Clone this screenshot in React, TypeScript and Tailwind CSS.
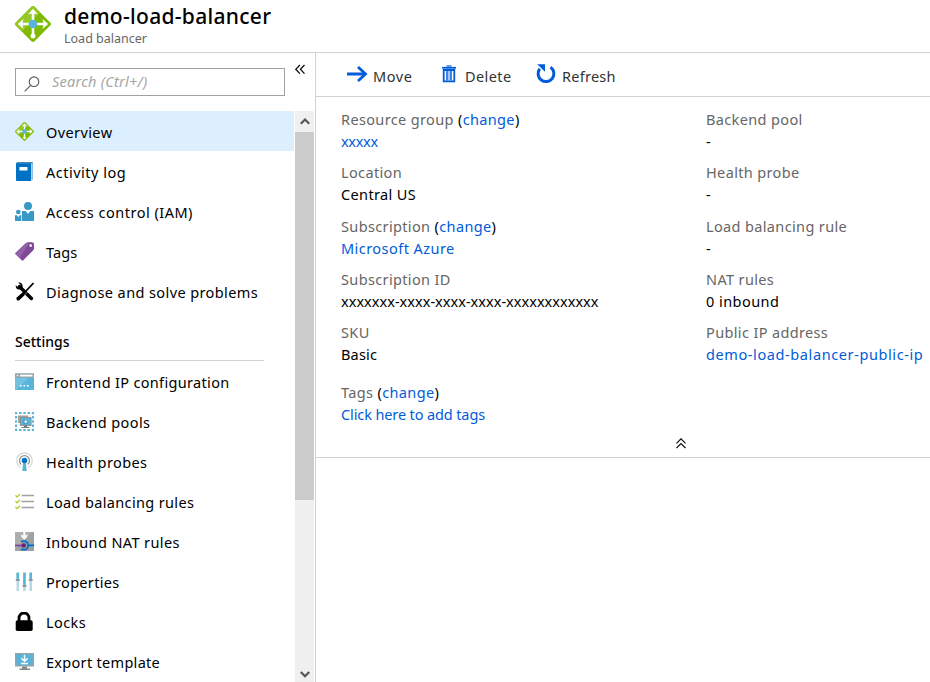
import React from 'react';

const svgProps = { width: 19, height: 19, viewBox: '0 0 19 19' };

function BalancerIcon({ size }: { size: number }) {
  return (
    <svg width={size} height={size} viewBox="0 0 36 36" className="shrink-0">
      <path d="M16.4.8a2.4 2.4 0 0 1 3.2 0l15.600 15.600a2.400 2.400 0 0 1 0 3.200L19.600 35.200a2.400 2.400 0 0 1-3.200 0L.8 19.600a2.400 2.400 0 0 1 0-3.200z" fill="#7fba00" />
      <path d="M16.400.8a2.400 2.400 0 0 1 3.200 0l5.500 5.500L7 25.800.8 19.600a2.400 2.400 0 0 1 0-3.200z" fill="#93c827" />
      <path d="M18 5v25M5 18h26" stroke="#fff" strokeWidth="2.600" fill="none" />
      <g fill="#fff">
        <path d="M18 2.800l5 5.700-5-1.200-5 1.200zM2.800 18l5.700-5-1.200 5 1.200 5zM33.200 18l-5.700-5 1.200 5-1.200 5z" />
        <circle cx="18" cy="30" r="2.500" />
      </g>
      <circle cx="18" cy="18" r="4.300" fill="#59b4d9" />
    </svg>
  );
}

const ActivityIcon = () => (
  <svg {...svgProps}>
    <path d="M2.500 0H18v17.500L15.500 19V2H1z" fill="#8fbce0" />
    <path d="M16.200 1.500V18" stroke="#d5e5f2" strokeWidth=".8" />
    <path d="M1 1.300h15V19H2a1 1 0 0 1-1-1z" fill="#0072c6" />
    <path d="M1.500.8h16" stroke="#2b75a8" />
    <path d="M4.500 5h8v3.500h-8z" fill="#fff" />
  </svg>
);

const AccessIcon = () => (
  <svg {...svgProps}>
    <g fill="#3999c6">
      <circle cx="13" cy="4" r="4" />
      <path d="M7 9h3.700l2.300 3 2.300-3H19v10H7z" />
      <circle cx="3.300" cy="10" r="2.300" />
      <path d="M0 13.300h2l1.300 2 1.300-2h1.700V19H0z" />
    </g>
  </svg>
);

const TagIcon = () => (
  <svg {...svgProps}>
    <path d="M0 11.500 10.500 1.500Q12 .3 14 .3h3q2 .2 2 2v4q0 1.200-1 2.200L7.500 19z" fill="#804998" />
    <path d="M0 11.500 10.500 1.500Q12 .3 14 .3h1L4.500 15.900z" fill="#9460a8" />
    <circle cx="15.700" cy="3.600" r="1.300" fill="#fff" />
  </svg>
);

const DiagnoseIcon = () => (
  <svg {...svgProps}>
    <path d="M4.500 4.500 16.400 16.400" stroke="#000" strokeWidth="3.500" strokeLinecap="round" />
    <path d="M3.200.5 6 3.200 5.500 5 3.400 5.600.8 3.200C.2 5.700 2.100 8 5 7.400L7.500 5C8.300 2.100 5.700 0 3.200.5z" />
    <path d="M18.500 1 11 9" stroke="#000" strokeWidth="1.800" />
    <path d="m8 10 2.300 2.400L4.500 18q-1.300 1-2.700 0-1-1.500.2-2.700z" />
    <path d="m9.700 12.900 3-3" stroke="#fff" strokeWidth=".5" />
  </svg>
);

const FrontendIcon = () => (
  <svg {...svgProps}>
    <path d="M0 1.500h19V18H0z" fill="#59b4d9" />
    <path d="M0 6h14L1 18H0z" fill="#72c1df" />
    <path d="M0 1.500h19v4H0z" fill="#a0a1a2" />
    <path d="M5 2.700h12.500v1.800H5z" fill="#fff" />
    <circle cx="2.500" cy="3.600" r=".8" fill="#fff" />
    <path d="M5 13h1.700v1.500H5zm3.500 0h1.700v1.500H8.500zm3.500 0h1.700v1.500H12z" fill="#fff" />
  </svg>
);

const PoolsIcon = () => (
  <svg {...svgProps}>
    <path d="M1 1h17v17H1z" fill="none" stroke="#59b4d9" strokeWidth="1.900" strokeDasharray="2.500 1.750" strokeDashoffset="1.250" />
    <path d="M3 3.500h10V11H3z" fill="#a0a1a2" />
    <path d="M5.400 5.400h10.700v8H5.400z" fill="#59b4d9" stroke="#8d8e90" strokeWidth="1" />
    <path d="M9 13.500h3v1.600h2.500v1H6.500v-1H9z" fill="#7a7a7a" />
    <path d="m10.500 6.500 2.700 1.400v3l-2.700 1.500-2.700-1.500v-3z" fill="#3e9cc4" />
    <path d="M10.800 7.300v4M8.800 9.300l2 1 1.700-1.200" stroke="#fff" strokeWidth=".9" fill="none" />
  </svg>
);

const ProbeIcon = () => (
  <svg {...svgProps}>
    <g fill="none">
      <path d="M5.500 15.400a7.800 7.800 0 1 1 8 0" stroke="#d2d3d4" strokeWidth="1.300" />
      <path d="M6.200 12.400a5 5 0 1 1 6.600 0" stroke="#929497" strokeWidth="1.300" />
    </g>
    <path d="M8.300 9h2.400l1 10H7.300z" fill="#59b4d9" />
    <circle cx="9.500" cy="8.500" r="2.800" fill="#0072c6" />
  </svg>
);

const RulesIcon = () => (
  <svg {...svgProps}>
    <g transform="translate(0 1.300)">
      <path d="M6.500 2.200H19M6.500 8.200H19M6.500 14.200H19" stroke="#a0a1a2" strokeWidth="1.300" />
      <path d="m.5 2 1.500 1.700L5 .8m-4.500 7L2 9.500l3-2.900m-4.500 7L2 15.300l3-2.900" stroke="#a6ca19" strokeWidth="1.200" fill="none" />
    </g>
  </svg>
);

const NatIcon = () => (
  <svg {...svgProps}>
    <path d="M0 0h19v19H0z" fill="#a0a1a2" />
    <path d="M0 0h17L0 17z" fill="#acadae" />
    <path d="M8.300 0h2v3.800l2-1.600v2.600L9.300 7.700l-3-2.900V2.200l2 1.600z" fill="#fff" />
    <path d="M0 13.500h7" stroke="#804998" strokeWidth="1.800" />
    <path d="M6 9.700c4-1.300 7.200 0 7.200 3.600 0 3.900-3.200 5.200-7.200 3.900" stroke="#0072c6" strokeWidth="1.800" fill="none" />
    <path d="M13 13.400h6" stroke="#0072c6" strokeWidth="1.800" />
    <circle cx="8.800" cy="13.400" r="2.200" fill="#68217a" />
  </svg>
);

const PropertiesIcon = () => (
  <svg {...svgProps}>
    <path d="M1.500 0h2.500v19H1.500zM8.200 0h2.500v19H8.200zM14.500 0H17v19h-2.500z" fill="#b5d8e5" />
    <path d="M1.500 1h2.500v7H1.500zM8.200 1h2.500v13H8.200zM14.500 1H17v7h-2.500z" fill="#59b4d9" />
    <path d="M.8 7.300h4v1.700h-4zM7.500 13.300h4V15h-4zM13.700 7.300h4v1.700h-4z" fill="#929497" />
  </svg>
);

const LockIcon = () => (
  <svg {...svgProps}>
    <path d="M4 9V6a5 5 0 0 1 10 0v3" fill="none" stroke="#000" strokeWidth="2.800" />
    <rect x=".7" y="8.300" width="17" height="10.700" rx="1.800" />
  </svg>
);

const ExportIcon = () => (
  <svg {...svgProps}>
    <path d="M0 1h19v13.500H0z" fill="#a0a1a2" />
    <path d="M1.300 2.200h16.400v11H1.300z" fill="#59b4d9" />
    <path d="M7 14.500h5v2h3V18H4.500v-1.500H7z" fill="#858789" />
    <path d="M9.500 2.800v6M6.300 6.200l3.200 3 3.200-3M6 11.500h7" stroke="#fff" strokeWidth="1.500" fill="none" />
  </svg>
);

type Item = { label: string; icon: React.ReactNode; cls: string };

const general: Item[] = [
  { label: 'Overview', icon: <BalancerIcon size={19} />, cls: 'tracking-[0.4px]' },
  { label: 'Activity log', icon: <ActivityIcon />, cls: 'tracking-[0.5px]' },
  { label: 'Access control (IAM)', icon: <AccessIcon />, cls: 'tracking-[0.5px]' },
  { label: 'Tags', icon: <TagIcon />, cls: 'tracking-[0.1px]' },
  { label: 'Diagnose and solve problems', icon: <DiagnoseIcon />, cls: 'tracking-[0.4px]' },
];

const settings: Item[] = [
  { label: 'Frontend IP configuration', icon: <FrontendIcon />, cls: 'tracking-[0.33px]' },
  { label: 'Backend pools', icon: <PoolsIcon />, cls: 'tracking-[0.4px]' },
  { label: 'Health probes', icon: <ProbeIcon />, cls: 'tracking-[0.4px]' },
  { label: 'Load balancing rules', icon: <RulesIcon />, cls: 'tracking-[0.35px]' },
  { label: 'Inbound NAT rules', icon: <NatIcon />, cls: 'tracking-[0.4px]' },
  { label: 'Properties', icon: <PropertiesIcon />, cls: 'tracking-[0.3px]' },
  { label: 'Locks', icon: <LockIcon />, cls: 'tracking-[0.4px]' },
  { label: 'Export template', icon: <ExportIcon />, cls: 'tracking-[0.3px]' },
];

function MenuItem({ item, active = false }: { item: Item; active?: boolean }) {
  return (
    <li className={`flex h-10 shrink-0 items-center gap-3 pl-[15px] ${active ? 'bg-[#dcefff]' : ''}`}>
      <span className="h-[19px] w-[19px]">{item.icon}</span>
      <span className={`pt-px leading-5 ${item.cls}`}>{item.label}</span>
    </li>
  );
}

function Field({ label, value, change = false, link = false, extra = '', track = 'tracking-[0.36px]' }: {
  label: string; value: string; change?: boolean; link?: boolean; extra?: string; track?: string;
}) {
  return (
    <div className={`h-[53.250px] leading-[22px] ${extra}`}>
      <dt className="tracking-[0.36px] text-[#666]">
        {label}
        {change && <span className="text-black"> (<a className="text-[#015cda]">change</a>)</span>}
      </dt>
      <dd className={`${track} ${link ? 'text-[#015cda]' : 'text-black'}`}>{value}</dd>
    </div>
  );
}

export default function App() {
  return (
    <div className="flex h-[682px] w-[930px] flex-col overflow-hidden bg-white font-['Noto_Sans',sans-serif] text-[14.500px] text-black">
      <header className="flex h-[53px] shrink-0 items-start gap-[13px] border-b border-[#d2d2d2] pl-[15px]">
        <span className="pt-[6px]"><BalancerIcon size={36} /></span>
        <div className="pt-[3px]">
          <h1 className="text-[21px] font-medium leading-[26px] tracking-[0.3px]">demo-load-balancer</h1>
          <p className="pt-px text-[12.500px] leading-[18px] text-[#666]">Load balancer</p>
        </div>
      </header>
      <div className="flex min-h-0 flex-1">
        <aside className="flex w-[316px] shrink-0 flex-col border-r border-[#d2d2d2]">
          <div className="flex h-[58px] shrink-0 items-start pl-[15px] pt-[15px]">
            <div className="flex h-7 w-[270px] items-center border border-[#a0a0a0] pl-2">
              <svg className="mt-1" width="16" height="16" viewBox="0 0 16 16" fill="none" stroke="#555" strokeWidth="1.100">
                <circle cx="10" cy="5.700" r="4.800" />
                <path d="M6.600 9.300.7 15.300" />
              </svg>
              <span className="-mt-px pl-3 text-[14.500px] italic tracking-[0.25px] text-[#a6a6a6]">Search (Ctrl+/)</span>
            </div>
            <svg className="ml-[10px] -mt-[4px]" width="11" height="11" viewBox="0 0 11 11" fill="none" stroke="#111" strokeWidth="1.300">
              <path d="M4.900 1 .8 5.300l4.100 4.300M9.500 1 5.400 5.300l4.100 4.300" />
            </svg>
          </div>
          <div className="flex min-h-0 flex-1">
            <nav className="w-[294px] overflow-hidden">
              <ul>{general.map((item, i) => <MenuItem key={item.label} item={item} active={i === 0} />)}</ul>
              <h2 className="ml-[15px] h-[50px] w-[249px] border-b border-[#d2d2d2] pt-5 text-[14px] font-medium leading-[22px]">Settings</h2>
              <ul>{settings.map((item) => <MenuItem key={item.label} item={item} />)}</ul>
            </nav>
            <div className="ml-px flex w-[19px] flex-col items-center bg-[#f0f0f0]">
              <svg className="h-[21px] shrink-0" width="10" height="21" viewBox="0 0 10 21" fill="none" stroke="#555" strokeWidth="2.200">
                <path d="m.8 12.700 4.200-4.200 4.200 4.200" />
              </svg>
              <div className="h-[368px] w-full bg-[#cbcbcb]" />
              <svg className="mt-auto h-[17px]" width="10" height="17" viewBox="0 0 10 17" fill="none" stroke="#555" strokeWidth="2.200">
                <path d="m.8 7 4.200 4.200L9.200 7" />
              </svg>
            </div>
          </div>
        </aside>
        <main className="flex min-w-0 flex-1 flex-col">
          <div className="flex h-11 shrink-0 items-start border-b border-[#d2d2d2] pl-[31px] pt-[11px] leading-6 text-[#333]">
            <svg className="mt-[2px] mr-[5px]" width="21" height="17" viewBox="0 0 21 17" fill="none" stroke="#015cda" strokeWidth="3">
              <path d="M0 8h18" />
              <path d="m11 1 7.500 7-7.500 7" strokeWidth="2.800" />
            </svg>
            <span className="w-[69px] tracking-[0.6px]">Move</span>
            <svg className="mt-[1px] mr-[9px]" width="14" height="18" viewBox="0 0 14 18" fill="none" stroke="#015cda">
              <path d="M4.500 1h5" strokeWidth="1.200" />
              <path d="M0 2.800h14" strokeWidth="1.800" />
              <path d="M1.700 5v11.300h10.600V5z" strokeWidth="1.800" />
              <path d="M5 5v10.500M9 5v10.500" strokeWidth="1.500" />
              <path d="M7 5v10.500" strokeWidth=".7" />
            </svg>
            <span className="w-[71px] tracking-[0.4px]">Delete</span>
            <svg className="-mt-[1px] mr-[6px]" width="20" height="21" viewBox="0 0 20 21" fill="none">
              <path d="M14.500 4.200A7.900 7.900 0 1 1 3.800 5.800" stroke="#015cda" strokeWidth="3" />
              <path d="M1.200 1.200H9v7.500z" fill="#015cda" />
            </svg>
            <span className="tracking-[0.25px]">Refresh</span>
          </div>
          <section className="flex h-[361px] shrink-0 flex-col border-b border-[#d2d2d2]">
            <div className="flex pl-[25px] pt-[11px]">
              <dl className="w-[365px]">
                <Field label="Resource group" value="xxxxx" change link track="tracking-[-0.3px]" />
                <Field label="Location" value="Central US" />
                <Field label="Subscription" value="Microsoft Azure" change link track="tracking-[0.45px]" />
                <Field label="Subscription ID" value="xxxxxxx-xxxx-xxxx-xxxx-xxxxxxxxxxxx" track="tracking-[0.03px]" />
                <Field label="SKU" value="Basic" track="tracking-[0.2px]" />
                <Field label="Tags" value="Click here to add tags" change link extra="mt-[7px]" track="tracking-[-0.12px]" />
              </dl>
              <dl className="w-[224px] whitespace-nowrap">
                <Field label="Backend pool" value="-" />
                <Field label="Health probe" value="-" />
                <Field label="Load balancing rule" value="-" />
                <Field label="NAT rules" value="0 inbound" track="tracking-[0.45px]" />
                <Field label="Public IP address" value="demo-load-balancer-public-ip" link track="tracking-[0.6px]" />
              </dl>
            </div>
            <svg className="ml-[360px] mt-[3px]" width="10" height="11" viewBox="0 0 10 11" fill="none" stroke="#111" strokeWidth="1.200">
              <path d="m.5 5.300 4.500-4.500 4.500 4.500M.5 10 5 5.500 9.500 10" />
            </svg>
          </section>
        </main>
      </div>
    </div>
  );
}
